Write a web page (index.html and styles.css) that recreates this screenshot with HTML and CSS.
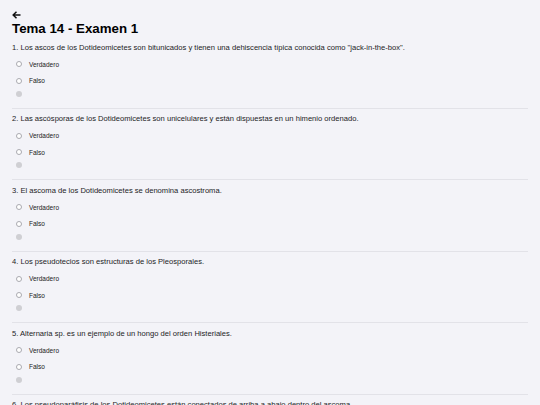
FILE: index.html
```html
<!DOCTYPE html>
<html lang="es">
<head>
<meta charset="utf-8">
<link rel="stylesheet" href="styles.css">
</head>
<body>
<div class="page">
  <div class="back">
    <svg width="9" height="8" viewBox="0 0 9 8"><path d="M8.5 4H1.2M4.5 0.8L1.2 4l3.3 3.2" fill="none" stroke="#111" stroke-width="1.5"/></svg>
  </div>
  <h1 class="title">Tema 14 - Examen 1</h1>
  <div class="q">
    <div class="qtext">1. Los ascos de los Dotideomicetes son bitunicados y tienen una dehiscencia típica conocida como "jack-in-the-box".</div>
    <div class="opt"><span class="radio"></span>Verdadero</div>
    <div class="opt"><span class="radio"></span>Falso</div>
    <div class="dot"></div>
  </div>
  <div class="q">
    <div class="qtext">2. Las ascósporas de los Dotideomicetes son unicelulares y están dispuestas en un himenio ordenado.</div>
    <div class="opt"><span class="radio"></span>Verdadero</div>
    <div class="opt"><span class="radio"></span>Falso</div>
    <div class="dot"></div>
  </div>
  <div class="q">
    <div class="qtext">3. El ascoma de los Dotideomicetes se denomina ascostroma.</div>
    <div class="opt"><span class="radio"></span>Verdadero</div>
    <div class="opt"><span class="radio"></span>Falso</div>
    <div class="dot"></div>
  </div>
  <div class="q">
    <div class="qtext">4. Los pseudotecios son estructuras de los Pleosporales.</div>
    <div class="opt"><span class="radio"></span>Verdadero</div>
    <div class="opt"><span class="radio"></span>Falso</div>
    <div class="dot"></div>
  </div>
  <div class="q">
    <div class="qtext">5. Alternaria sp. es un ejemplo de un hongo del orden Histeriales.</div>
    <div class="opt"><span class="radio"></span>Verdadero</div>
    <div class="opt"><span class="radio"></span>Falso</div>
    <div class="dot"></div>
  </div>
  <div class="q">
    <div class="qtext">6. Los pseudoparáfisis de los Dotideomicetes están conectados de arriba a abajo dentro del ascoma.</div>
    <div class="opt"><span class="radio"></span>Verdadero</div>
    <div class="opt"><span class="radio"></span>Falso</div>
    <div class="dot"></div>
  </div>
</div>
</body>
</html>
```
FILE: styles.css
```css
html, body {
  margin: 0;
  padding: 0;
  background: #f3f3f8;
}
body {
  font-family: "Liberation Sans", Arial, sans-serif;
  color: #1c1c1e;
}
.page {
  padding: 11px 12px 0 12px;
}
.back {
  height: 8px;
  display: flex;
  align-items: center;
}
.back svg {
  display: block;
}
.title {
  margin: 0;
  font-size: 13.3px;
  line-height: 16px;
  font-weight: bold;
  color: #000;
  margin-top: 2px;
}
.q {
  border-bottom: 1px solid #e2e2e8;
  padding-bottom: 11px;
  margin-top: 5.5px;
}
.q:first-of-type {
  margin-top: 8px;
}
.qtext {
  font-size: 7.6px;
  line-height: 10px;
  margin-bottom: 6px;
  white-space: nowrap;
}
.opt {
  display: flex;
  align-items: center;
  font-size: 6.5px;
  line-height: 11px;
  height: 11px;
  margin-bottom: 5.5px;
  padding-left: 4px;
  color: #222;
}
.radio {
  width: 4px;
  height: 4px;
  border: 0.7px solid #aaaab0;
  border-radius: 50%;
  margin-right: 7px;
  background: #fff;
}
.dot {
  width: 6px;
  height: 6px;
  border-radius: 50%;
  background: #cfcfd3;
  margin-left: 4px;
  margin-top: -1px;
}
```
